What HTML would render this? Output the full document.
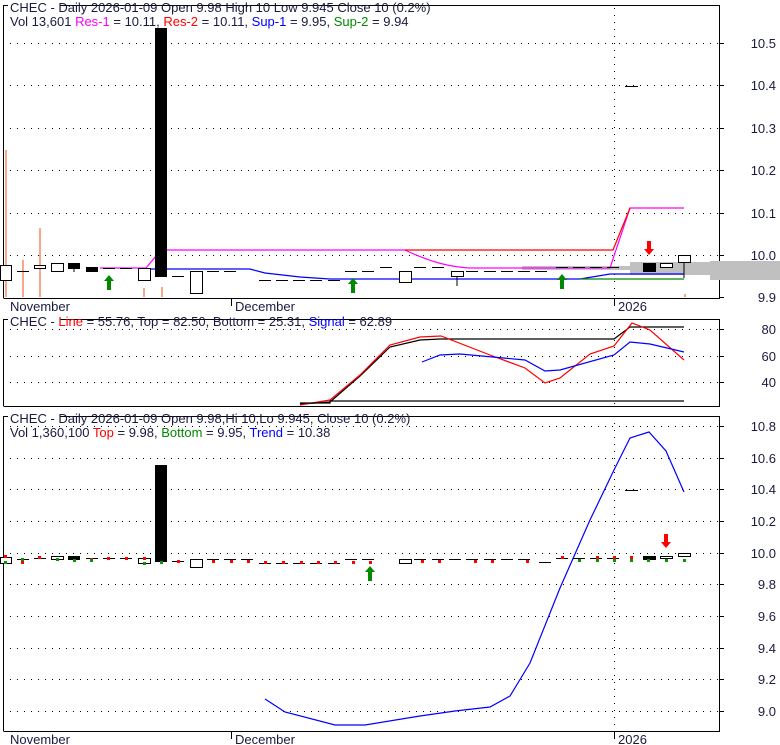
<!DOCTYPE html><html><head><style>body{margin:0;background:#fff}svg{display:block;font-family:"Liberation Sans",Arial,sans-serif}</style></head><body>
<svg width="780" height="745" viewBox="0 0 780 745" xmlns="http://www.w3.org/2000/svg">
<rect width="780" height="745" fill="#fff"/>
<g stroke="#000" stroke-dasharray="1 6" stroke-width="1">
<path d="M10 43.5H719M10 85.5H719M10 128.5H719M10 170.5H719M10 213.5H719M10 255.5H719"/>
<path d="M10 329.5H719M10 356.5H719M10 382.5H719"/>
<path d="M10 426.5H719M10 458.5H719M10 489.5H719M10 521.5H719M10 553.5H719M10 584.5H719M10 616.5H719M10 648.5H719M10 679.5H719M10 711.5H719"/>
<path d="M614.5 8V298M614.5 319V406M614.5 416V731"/>
</g>
<g fill="none" stroke="#000">
<path d="M3.5 298V5.5H8M60 5.5H719.5V298.5H3.5"/>
<path d="M3.5 406V319.5H8M60 319.5H719.5V406.5H3.5"/>
<path d="M3.5 731V416.5H8M60 416.5H719.5V731.5H3.5"/>
<path d="M231.5 298v8M614.5 298v8M231.5 731v8M614.5 731v8"/>
<path d="M719 43.5h5M719 85.5h5M719 128.5h5M719 170.5h5M719 213.5h5M719 255.5h5M719 297.5h5M719 329.5h5M719 356.5h5M719 382.5h5M719 426.5h5M719 458.5h5M719 489.5h5M719 521.5h5M719 553.5h5M719 584.5h5M719 616.5h5M719 648.5h5M719 679.5h5M719 711.5h5"/>
</g>
<path d="M522 266H630V262H710V261H780V280H710V275H630V270H522Z" fill="#c0c0c0"/>
<g fill="#f8a888"><rect x="5" y="150" width="2" height="147"/><rect x="22" y="260" width="2" height="37"/><rect x="39" y="228" width="2" height="69"/><rect x="143" y="288" width="2" height="9"/><rect x="161" y="287" width="2" height="10"/><rect x="684" y="294" width="2" height="3"/></g>
<g fill="none" stroke-width="1.2">
<path d="M100 268H146L161 250H405C430 262 450 267 470 268H610L630 208H684" stroke="#f0f"/>
<path d="M405 250H613L630 208" stroke="#f00"/>
<path d="M146 269H250L265 273L300 277L330 279H580L610 274H684" stroke="#00f"/>
<path d="M580 279H684" stroke="#080"/>
</g>
<g stroke="#000" fill="#fff">
<rect x="0.5" y="265.5" width="11" height="15"/>
<rect x="34.5" y="265.5" width="11" height="3"/>
<rect x="51.5" y="263.5" width="12" height="8"/>
<rect x="68.5" y="263.5" width="11" height="5" fill="#000"/>
<rect x="86.5" y="267.5" width="11" height="4" fill="#000"/>
<rect x="138.5" y="268.5" width="12" height="12"/>
<rect x="155.5" y="28.5" width="11" height="248" fill="#000"/>
<rect x="190.5" y="271.5" width="12" height="22"/>
<rect x="399.5" y="271.5" width="12" height="11"/>
<rect x="451.5" y="271.5" width="12" height="5"/>
<rect x="643.5" y="263.5" width="12" height="8" fill="#000"/>
<rect x="660.5" y="263.5" width="12" height="4"/>
<rect x="678.5" y="255.5" width="12" height="7"/>
<path d="M17 271.5h12M103 268.5h12M120 268.5h12M172 276.5h12M207 271.5h12M224 271.5h12M259 280.5h12M276 280.5h12M293 280.5h12M310 280.5h12M328 280.5h12M345 271.5h12M362 271.5h12M380 267.5h12M414 267.5h12M432 267.5h12M466 271.5h12M484 271.5h12M501 271.5h12M518 271.5h12M535 271.5h12M556 267.5h12M573 267.5h12M590 267.5h12M607 267.5h12M625 86.5h13M457 276v10M684 262v16M74 268v4"/>
</g>
<g fill="#080"><path d="M109 275l-5 6h3v9h4v-9h3z"/><path d="M353 278l-5 6h3v9h4v-9h3z"/><path d="M562 274l-5 6h3v9h4v-9h3z"/><path d="M370 566l-5 6h3v9h4v-9h3z"/></g>
<g fill="#f00"><path d="M649 255l-5-6h3v-8h4v8h3z"/><path d="M666 548l-5-6h3v-8h4v8h3z"/></g>
<g fill="none" stroke-width="1.2">
<path d="M300 404L330 402L360 376L390 347L420 340L440 339H614L630 327H684" stroke="#000"/>
<path d="M300 405L330 400L360 375L390 345L420 337L441 336L490 355L525 368L545 383L560 378L590 354L614 346L632 323L650 330L684 360" stroke="#f00"/>
<path d="M422 362L440 355L460 354L525 360L545 371L560 370L614 355L630 342L650 344L684 352" stroke="#00f"/>
<path d="M300 403H330V401H684" stroke="#000"/>
</g>
<path d="M265 699L285 712L335 725L365 725L420 716L455 711L490 707L510 696L530 663L560 588L590 520L614 470L630 438L649 432L666 451L684 492" fill="none" stroke="#00f" stroke-width="1.2"/>
<g stroke="#000" fill="#fff">
<rect x="0.5" y="557.5" width="11" height="6"/>
<rect x="51.5" y="556.5" width="12" height="3"/>
<rect x="68.5" y="556.5" width="11" height="3" fill="#000"/>
<rect x="138.5" y="558.5" width="12" height="5"/>
<rect x="155.5" y="465.5" width="11" height="96" fill="#000"/>
<rect x="190.5" y="559.5" width="12" height="8"/>
<rect x="399.5" y="559.5" width="12" height="4"/>
<rect x="643.5" y="556.5" width="12" height="3" fill="#000"/>
<rect x="660.5" y="556.5" width="12" height="2"/>
<rect x="678.5" y="553.5" width="12" height="3"/>
<path d="M17 559.5h12M34 558.5h12M86 558.5h12M103 558.5h12M120 558.5h12M172 561.5h12M207 559.5h12M224 559.5h12M241 559.5h12M259 563.5h12M276 563.5h12M293 563.5h12M310 563.5h12M328 563.5h12M345 559.5h12M362 559.5h12M414 559.5h12M432 559.5h12M449 559.5h12M466 559.5h12M484 559.5h12M501 559.5h12M518 559.5h12M539 562.5h12M556 558.5h12M573 558.5h12M590 558.5h12M607 558.5h12M625 490.5h13"/>
</g>
<g fill="#f00"><rect x="4" y="555" width="3" height="3"/><rect x="21" y="561" width="3" height="3"/><rect x="38" y="556" width="3" height="3"/><rect x="90" y="558" width="3" height="3"/><rect x="107" y="557" width="3" height="3"/><rect x="125" y="557" width="3" height="3"/><rect x="143" y="557" width="3" height="3"/><rect x="177" y="560" width="3" height="3"/><rect x="212" y="560" width="3" height="3"/><rect x="230" y="560" width="3" height="3"/><rect x="247" y="560" width="3" height="3"/><rect x="264" y="561" width="3" height="3"/><rect x="282" y="561" width="3" height="3"/><rect x="300" y="561" width="3" height="3"/><rect x="317" y="561" width="3" height="3"/><rect x="334" y="561" width="3" height="3"/><rect x="352" y="561" width="3" height="3"/><rect x="369" y="561" width="3" height="3"/><rect x="421" y="560" width="3" height="3"/><rect x="438" y="560" width="3" height="3"/><rect x="474" y="560" width="3" height="3"/><rect x="491" y="560" width="3" height="3"/><rect x="526" y="560" width="3" height="3"/><rect x="561" y="556" width="3" height="3"/><rect x="596" y="556" width="3" height="3"/><rect x="613" y="556" width="3" height="3"/><rect x="630" y="556" width="3" height="3"/></g>
<g fill="#090"><rect x="4" y="561" width="3" height="3"/><rect x="21" y="558" width="3" height="3"/><rect x="56" y="558" width="3" height="3"/><rect x="73" y="559" width="3" height="3"/><rect x="90" y="559" width="3" height="3"/><rect x="143" y="562" width="3" height="3"/><rect x="160" y="561" width="3" height="3"/><rect x="578" y="559" width="3" height="3"/><rect x="596" y="559" width="3" height="3"/><rect x="613" y="559" width="3" height="3"/><rect x="630" y="559" width="3" height="3"/><rect x="647" y="559" width="3" height="3"/><rect x="665" y="559" width="3" height="3"/><rect x="683" y="559" width="3" height="3"/></g>
<g font-size="13" fill="#1a1a40" xml:space="preserve" style="white-space:pre">
<text x="10" y="12">CHEC - Daily 2026-01-09 Open 9.98  High 10  Low 9.945  Close 10 (0.2%)</text>
<text x="10" y="26">Vol 13,601 <tspan fill="#f0f">Res-1</tspan> = 10.11, <tspan fill="#f00">Res-2</tspan> = 10.11, <tspan fill="#00f">Sup-1</tspan> = 9.95, <tspan fill="#080">Sup-2</tspan> = 9.94</text>
<text x="10" y="326">CHEC - <tspan fill="#f00">Line</tspan> = 55.76, Top = 82.50, Bottom = 25.31, <tspan fill="#00f">Signal</tspan> = 62.89</text>
<text x="10" y="423">CHEC - Daily 2026-01-09 Open 9.98,Hi 10,Lo 9.945, Close 10 (0.2%)</text>
<text x="10" y="437">Vol 1,360,100 <tspan fill="#f00">Top</tspan> = 9.98, <tspan fill="#080">Bottom</tspan> = 9.95, <tspan fill="#00f">Trend</tspan> = 10.38</text>
<text x="10" y="311">November</text><text x="235" y="311">December</text><text x="618" y="311">2026</text>
<text x="10" y="744">November</text><text x="235" y="744">December</text><text x="618" y="744">2026</text>
</g>
<g font-size="13" fill="#1a1a40" text-anchor="end">
<text x="776" y="48">10.5</text><text x="776" y="90">10.4</text><text x="776" y="133">10.3</text><text x="776" y="175">10.2</text><text x="776" y="218">10.1</text><text x="776" y="260">10.0</text><text x="776" y="302">9.9</text>
<text x="776" y="334">80</text><text x="776" y="361">60</text><text x="776" y="387">40</text>
<text x="776" y="431">10.8</text><text x="776" y="463">10.6</text><text x="776" y="494">10.4</text><text x="776" y="526">10.2</text><text x="776" y="558">10.0</text><text x="776" y="589">9.8</text><text x="776" y="621">9.6</text><text x="776" y="653">9.4</text><text x="776" y="684">9.2</text><text x="776" y="716">9.0</text>
</g>
</svg>
</body></html>
